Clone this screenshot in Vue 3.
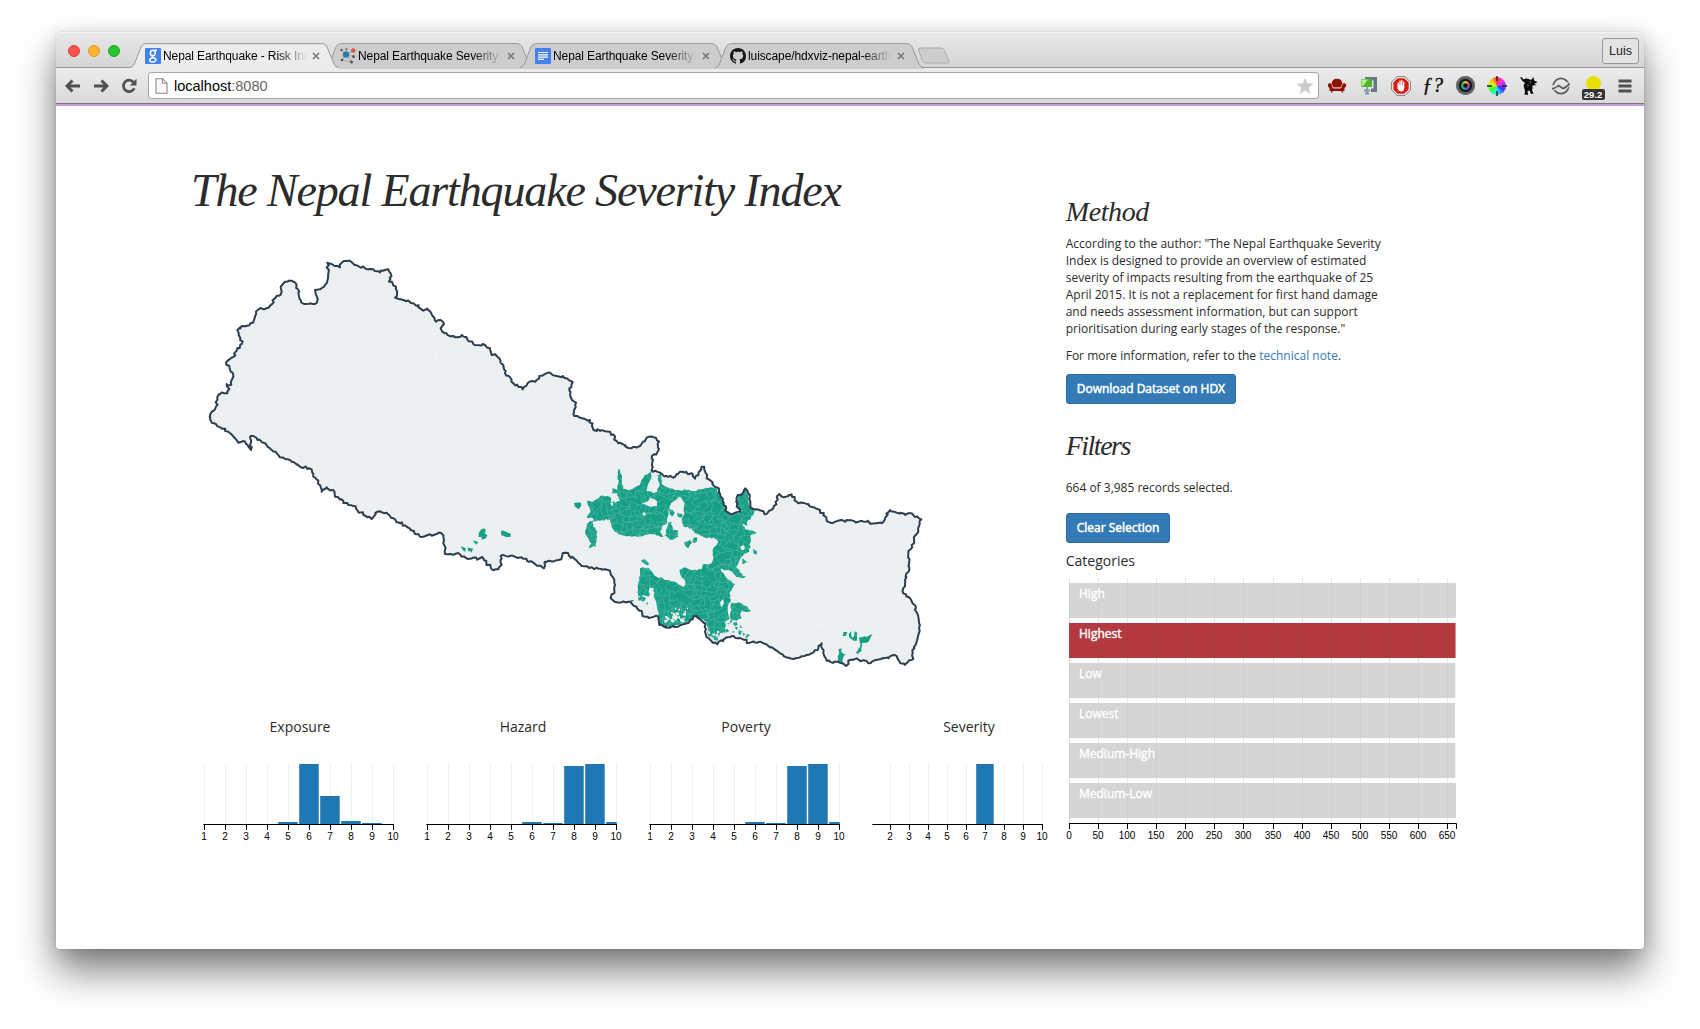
<script setup>
const tabs = [
  { title: 'Nepal Earthquake - Risk Ind', icon: 'google' },
  { title: 'Nepal Earthquake Severity', icon: 'network' },
  { title: 'Nepal Earthquake Severity', icon: 'docs' },
  { title: 'luiscape/hdxviz-nepal-earth', icon: 'github' },
]

const charts = [
  { name: 'Exposure', start: 15.3, first: 1, x1: 16.5, step: 21, bars: { 5: 2, 6: 60, 7: 28, 8: 3, 9: 1 } },
  { name: 'Hazard', start: 15.3, first: 1, x1: 16.5, step: 21, bars: { 6: 2, 7: 1, 8: 58, 9: 60, 10: 2 } },
  { name: 'Poverty', start: 15.3, first: 1, x1: 16.5, step: 21, bars: { 6: 2, 7: 1, 8: 58, 9: 60, 10: 2 } },
  { name: 'Severity', start: 15.3, first: 2, x1: 14.5, step: 19, bars: { 7: 60 } },
].map((c) => {
  const x = (n) => c.x1 + (n - 1) * c.step
  const ticks = []
  for (let n = c.first; n <= 10; n++) ticks.push({ n, x: Math.floor(x(n)) + 0.5 })
  const bars = Object.entries(c.bars).map(([n, h]) => ({
    n,
    h,
    x: x(+n) - c.step / 2 + 0.2,
    w: +n === 10 ? c.step / 2 : c.step - 1.5,
  }))
  return { ...c, ticks, bars, end: x(10) + 0.5 }
})

const categories = [
  { name: 'High', w: 387 },
  { name: 'Highest', w: 386.4, on: true },
  { name: 'Low', w: 386.2 },
  { name: 'Lowest', w: 385.8 },
  { name: 'Medium-High', w: 386.2 },
  { name: 'Medium-Low', w: 387 },
]
const catTicks = Array.from({ length: 14 }, (_, i) => ({ v: i * 50, x: Math.floor(3.5 + i * 29.08) + 0.5 }))

/* Small deterministic generator, so the map is the same on each load */
function rng(seed) {
  let s = seed
  return () => ((s = (s * 16807) % 2147483647) / 2147483647)
}
const parse = (str, dx = 0, dy = 0) =>
  str.trim().split(/\s+/).map((p) => {
    const [x, y] = p.split(',').map(Number)
    return [x + dx, y + dy]
  })
function rough(pts, amp, len, seed) {
  const r = rng(seed)
  const out = []
  pts.forEach((a, i) => {
    const b = pts[(i + 1) % pts.length]
    const d = Math.hypot(b[0] - a[0], b[1] - a[1])
    const n = Math.max(1, Math.round(d / len))
    out.push(a)
    for (let k = 1; k < n; k++) {
      out.push([
        a[0] + ((b[0] - a[0]) * k) / n + (r() - 0.5) * amp,
        a[1] + ((b[1] - a[1]) * k) / n + (r() - 0.5) * amp,
      ])
    }
  })
  return 'M' + out.map((p) => p.map((v) => v.toFixed(1)).join(' ')).join('L') + 'Z'
}

const northWest = parse(`65,548 62,520 78,500 82,470 95,457 112,460 118,447 110,432 124,434 130,405 122,395 118,378 108,368
  128,352 140,332 155,312 158,305 146,285 142,270 155,258 178,256 192,240 198,215 205,208 222,208 240,197 255,175 275,155
  272,142 285,125 305,122 315,127 328,155 332,180 342,192 375,192 383,178 375,150 390,148 410,130 415,100 412,68 425,72
  450,82 455,68 475,62 500,76 550,88 570,97 595,88 602,100 597,125 618,140 622,155 615,173 640,180 670,190 700,212 712,206
  738,245 752,240 762,252 752,265 770,280 795,292 815,285 850,312 885,315 900,325 905,345 920,348 940,375 945,400 970,430
  998,448 1018,425 1040,420 1048,408 1080,398 1100,408 1118,408`)
const east = parse(`15,55 38,66 28,85 36,120 48,128 43,168 90,180 100,210 150,215 170,243 205,264 240,258 260,233 280,232
  297,245 293,275 275,295 277,335 300,338 320,348 345,350 360,335 395,340 405,356 415,345 425,320 433,320 440,355 470,382
  482,410 498,440 495,452 515,463 540,455 530,440 533,405 548,400 556,385 565,400 570,440 590,448 620,462 640,445 658,402
  672,412 695,403 710,425 745,432 780,450 800,482 820,488 860,480 884,484 920,485 945,490 965,490 990,450 1010,458 1060,465
  1084,478 1075,515 1055,555 1045,585 1048,630 1035,660 1030,700 1065,735 1080,795 1070,845 1058,880 1055,900 1035,915
  1015,900 1005,885 985,895 960,898 925,910 890,895 865,902 858,918 845,910 800,902 790,880 785,850 775,865 740,885 700,897
  660,880 640,865 600,845 570,848 515,828 500,832 472,853 440,832 437,790 410,768 380,790 330,803 298,795 295,770 255,770
  230,740 205,725 180,728 152,715 163,690 163,660 150,632 65,618 45,598 15,578`, 1110, 360)
const southWest = parse(`1105,960 1065,965 1062,985 995,952 932,948 935,975 925,988 905,988 880,955 830,955 810,943 765,942
  762,900 755,880 690,890 660,865 610,835 590,818 562,815 545,837 520,825 490,798 475,795 435,770 430,750 410,742 395,755
  390,735 370,710 365,688 330,680 305,665 265,645 240,625 215,605 190,588 180,592 183,630 165,605 145,608 115,575`)
const country = rough([...northWest, ...east, ...southWest], 8, 7, 77)

const affectedShapes = [
  `158,385 172,390 176,328 180,328 186,365 190,388 215,388 240,375 255,345 272,335 274,345 262,380 258,392 280,400 292,395
   298,370 292,345 302,340 304,370 318,380 345,390 380,390 410,392 455,382 468,382 482,412 498,440 495,452 515,463 540,457
   530,435 533,405 548,400 556,387 565,405 568,440 582,448 580,465 565,480 562,497 550,490 555,508 590,518 572,525 572,545
   568,575 555,580 545,590 537,605 528,622 545,640 558,650 545,655 525,645 510,632 482,628 500,655 525,672 515,690 508,700
   512,725 503,740 508,778 495,785 495,820 480,820 472,842 445,828 440,785 410,768 380,785 350,795 330,802 300,795 295,765
   290,735 282,712 282,685 270,682 266,710 250,705 235,708 233,680 240,625 268,625 290,650 320,660 350,668 372,680 376,665
   360,640 358,630 372,622 400,630 425,628 430,612 455,610 460,590 458,570 475,545 460,532 440,535 405,520 395,505 370,498
   365,480 372,465 374,430 360,410 340,425 328,440 325,465 320,490 305,500 300,515 310,530 285,523 255,525 235,530 195,528
   165,515 155,500 150,478 125,480 105,485 100,475 80,472 92,455 82,422 100,425 120,408 150,410 156,430 176,410 172,400 155,400`,
  '42,430 63,428 64,438 55,448 45,440',
  '88,485 100,482 100,500 112,515 108,560 86,562 94,550 76,522 80,500',
  '326,446 338,450 344,458 336,470 328,462',
  '352,458 368,462 366,472 354,470',
  '325,488 335,485 338,510 355,512 354,530 335,540 312,528 318,510',
  '375,545 390,540 396,548 385,565 376,558',
  '398,540 410,532 410,545 402,550',
  '245,600 255,598 268,612 262,616 244,604',
  '580,565 592,575 590,583 582,582',
  '550,595 565,608 545,612',
  '515,728 540,728 562,740 573,752 555,755 545,752 540,762 545,775 530,782 512,778',
  '234,712 245,708 258,715 250,725 236,722',
  '212,720 222,720 215,730', '258,728 264,728 262,736', '502,790 510,788 506,800', '520,788 530,786 533,795 524,798',
  '540,792 548,805 540,803', '535,808 548,815 542,826 534,820', '560,822 570,825 562,835 555,832', '518,812 524,815 518,820',
  '510,780 518,782 512,792', '500,806 508,812 500,818', '526,800 534,802 530,810', '548,818 556,822 550,828',
  '850,816 862,816 858,828 848,828', '866,828 874,814 878,834 884,814 892,818 890,842 880,842',
  '898,832 925,828 938,822 930,836 920,848 905,850 905,870 895,885 886,878 900,862',
  '835,868 845,865 848,880 860,885 850,892 850,908 838,910 834,895',
].map((s) => parse(s, 1110, 360))
const westShapes = [
  '866,882 874,868 887,867 884,880 892,886 888,895 876,900 874,890 866,892', '934,872 950,876 962,880 962,890 950,892 934,886',
  '848,902 865,906 858,914', '812,918 828,926 825,935', '836,922 850,926 845,938 834,934',
].map((s) => parse(s))
const affected = [...affectedShapes, ...westShapes].map((p, i) => rough(p, 6, 7, 100 + i)).join('')

const gapShapes = [
  '245,430 262,425 270,412 280,416 292,425 292,438 270,440', '248,457 258,460 256,467 248,466', '160,416 176,412 180,422 164,428',
  '540,560 552,555 555,565 545,570', '556,585 565,590 550,598', '480,728 490,718 492,730 484,742', '150,430 160,428 158,438',
  '310,522 320,520 316,530', '562,600 572,606 560,606',
].map((s) => parse(s, 1110, 360))
const speck = rng(4711)
for (let i = 0; i < 26; i++) {
  const x = 1110 + 312 + speck() * 70
  const y = 360 + 742 + speck() * 40
  const s = 3 + speck() * 6
  gapShapes.push([[x, y], [x + s, y - 2], [x + s * 1.2, y + s * 0.7], [x + 2, y + s]])
}
for (let i = 0; i < 16; i++) {
  const x = 1110 + 440 + speck() * 52
  const y = 360 + 812 + speck() * 26
  const s = 3 + speck() * 6
  gapShapes.push([[x, y], [x + s, y - 2], [x + s, y + s * 0.7], [x + 2, y + s]])
}
const gaps = gapShapes.map((p, i) => rough(p, 3, 7, 300 + i)).join('')

/* District mesh: an irregular lattice with some of its edges left out */
function mesh(x0, y0, x1, y1, size, seed) {
  const r = rng(seed)
  const rows = []
  for (let y = y0, j = 0; y <= y1; y += size, j++) {
    const row = []
    for (let x = x0; x <= x1; x += size) {
      row.push([x + (j % 2) * size * 0.5 + (r() - 0.5) * size * 1.1, y + (r() - 0.5) * size * 1.1])
    }
    rows.push(row)
  }
  let d = ''
  const seg = (a, b) => (d += `M${a[0].toFixed(1)} ${a[1].toFixed(1)}L${b[0].toFixed(1)} ${b[1].toFixed(1)}`)
  rows.forEach((row, j) =>
    row.forEach((p, i) => {
      if (row[i + 1] && r() > 0.3) seg(p, row[i + 1])
      if (rows[j + 1] && r() > 0.3) seg(p, rows[j + 1][i])
    }),
  )
  return d
}
const greyMesh = mesh(60, 60, 2200, 1280, 17, 9)
const greenMesh = mesh(1180, 700, 1710, 1210, 14, 31)
</script>

<template>
  <div class="desktop">
    <div class="window">
      <header class="strip">
        <div class="lights"><i class="red"></i><i class="amber"></i><i class="green"></i></div>
        <div class="tabs">
          <div v-for="(t, i) in tabs" :key="i" class="tab" :class="{ active: i === 0 }">
            <svg class="shape" width="210" height="26" viewBox="0 0 210 26">
              <path class="fill" d="M0 25Q3 24 4.500 21L10.500 5Q12 1 15.500 1H192Q196 1 197.500 5L204 21Q205 24.500 209 25V26H0Z" />
              <path class="edge" d="M0 24.500Q3 24 4.500 21L10.500 5Q12 .6 15.500 .6H192Q196 .6 197.500 5L204 21Q205 24.500 209 24.500" />
            </svg>
            <svg class="fav" width="16" height="16" viewBox="0 0 16 16">
              <template v-if="t.icon === 'google'">
                <rect width="16" height="16" rx="1" fill="#4481ec" />
                <g fill="none" stroke="#fff" stroke-width="1.500">
                  <ellipse cx="7.800" cy="4.900" rx="2.500" ry="2.700" />
                  <path d="M9.500 2.300L12 2M8 7.600Q6 8.800 8.200 9.500Q11.300 10.500 10.800 12.300Q10 14.200 7.500 14.100Q4.500 13.900 4.700 12Q5 10.300 8 9.800" />
                </g>
              </template>
              <template v-else-if="t.icon === 'network'">
                <path d="M2 2.500L6 6.500L13 3M6 6.500L13 8.500M6 6.500L2 12L11 14M6 6.500L11 13" stroke="#999" stroke-width=".8" fill="none" />
                <circle cx="6" cy="6.500" r="3.200" fill="#2a7ab0" /><circle cx="13.200" cy="2.500" r="2.300" fill="#d9544f" />
                <g fill="#555"><circle cx="1.500" cy="2" r="1.200" /><circle cx="6.500" cy="1.300" r="1" /><circle cx="13.500" cy="8.500" r="1.500" /><circle cx="2" cy="12" r="1.300" /><circle cx="11.500" cy="14" r="1.500" /></g>
              </template>
              <template v-else-if="t.icon === 'docs'">
                <rect width="16" height="16" rx="1" fill="#4481ec" />
                <path d="M3 4.500h10M3 6.800h10M3 9.100h10M3 11.400h6" stroke="#fff" stroke-width="1.200" />
              </template>
              <path v-else fill="#181616" d="M8 0C3.580 0 0 3.580 0 8c0 3.540 2.290 6.530 5.470 7.590.4.070.55-.17.55-.38 0-.19-.01-.82-.01-1.490-2.010.37-2.530-.49-2.690-.94-.09-.23-.48-.94-.82-1.130-.28-.15-.68-.52-.01-.53.63-.01 1.080.58 1.230.82.72 1.210 1.870.87 2.330.66.070-.52.28-.87.51-1.070-1.780-.2-3.640-.89-3.640-3.950 0-.87.31-1.590.82-2.150-.08-.2-.36-1.020.08-2.120 0 0 .67-.21 2.200.82.64-.18 1.320-.27 2-.27s1.360.090 2 .27c1.530-1.040 2.200-.82 2.200-.82.44 1.100.16 1.920.08 2.120.51.56.82 1.270.82 2.150 0 3.070-1.870 3.750-3.650 3.950.29.25.54.73.54 1.480 0 1.070-.01 1.930-.01 2.200 0 .21.15.46.55.38A8.010 8.010 0 0 0 16 8c0-4.420-3.580-8-8-8z" />
            </svg>
            <span class="tab-title">{{ t.title }}</span>
            <svg class="close" width="8" height="8" viewBox="0 0 8 8"><path d="M1 1L7 7M7 1L1 7" stroke="#777" stroke-width="1.600" /></svg>
          </div>
          <svg class="new-tab" width="34" height="18" viewBox="0 0 34 18">
            <path d="M3.500 1H24Q26.500 1 27.500 3.500L32 14Q32.500 16 30.500 16H9Q6.500 16 5.500 13.500L1.500 3Q1 1 3.500 1Z" fill="#cdcdcd" stroke="#aaa" />
          </svg>
        </div>
        <div class="profile">Luis</div>
      </header>

      <div class="toolbar">
        <nav class="nav">
          <svg width="16" height="14" viewBox="0 0 16 14"><path d="M7.500 1.500L2 7L7.500 12.500M2 7H15" fill="none" stroke="#505050" stroke-width="3" /></svg>
          <svg width="16" height="14" viewBox="0 0 16 14"><path d="M8.500 1.500L14 7L8.500 12.500M14 7H1" fill="none" stroke="#505050" stroke-width="3" /></svg>
          <svg width="16" height="16" viewBox="0 0 16 16"><path d="M12.500 4.200A5.700 5.700 0 1 0 13.300 10.300" fill="none" stroke="#505050" stroke-width="2.700" /><path d="M15.500 .8V7.500H8.800Z" fill="#505050" /></svg>
        </nav>
        <div class="address">
          <svg width="13" height="16" viewBox="0 0 13 16"><path d="M1 .7H7.500L12 5.200V15.300H1Z" fill="#fafafa" stroke="#888" stroke-width="1.100" /><path d="M7.500 .7V5.200H12" fill="none" stroke="#888" /></svg>
          <span class="url">localhost<em>:8080</em></span>
          <svg class="star" width="18" height="18" viewBox="0 0 18 18"><path d="M9 .5L11.300 6.300L17.500 6.700L12.800 10.700L14.300 17L9 13.600L3.700 17L5.200 10.700L.5 6.700L6.700 6.300Z" fill="#ccc" /></svg>
        </div>
        <div class="extensions">
          <span>
            <svg width="20" height="16" viewBox="0 0 20 16"><path d="M4.500 6Q5 .8 10 .8T15.500 6L14 9.500H6Z" fill="#8f1206" /><path d="M.8 6.500Q2.500 4.500 4.500 6L6 10.300H14L15.500 6Q17.500 4.500 19.200 6.500Q19.500 8.500 17.500 10V13H16V14.500H14.500V13H5.500V14.500H4V13H2.500V10Q.5 8.500 .8 6.500Z" fill="#8f1206" /><path d="M4.800 6.500L6.300 10H13.700L15.200 6.500" stroke="#e9c5bf" stroke-width=".7" fill="none" /></svg>
          </span>
          <span>
            <svg width="18" height="20" viewBox="0 0 18 20"><path d="M5 1H17V16H11V12.500H13.500V4.500H5Z" fill="#66798b" /><rect x="1" y="3" width="11" height="8" rx="1" fill="#4fb52f" /><path d="M1.500 3.500H8L3 10H1.500Z" fill="#b5f08c" /><path d="M7 11V17M4 14.500H10M5 17.500H9" stroke="#8398a9" stroke-width="1.800" /></svg>
          </span>
          <span>
            <svg width="20" height="20" viewBox="0 0 20 20"><path d="M6 .7H14L19.300 6V14L14 19.300H6L.7 14V6Z" fill="#fff" stroke="#555" stroke-width=".8" /><path d="M6.600 2.300H13.400L17.700 6.600V13.400L13.400 17.700H6.600L2.300 13.400V6.600Z" fill="#d81c12" /><path d="M6.500 7Q7.500 6 7.900 7V9.300H8.300V5Q9 4 9.700 5V9H10.100V4.500Q10.900 3.700 11.500 4.500V9.200H12V6Q12.700 5.200 13.300 6V12Q13 15.500 10 15.500Q7.500 15.300 6.500 12.500Z" fill="#fff" /></svg>
          </span>
          <span class="whatfont">ƒ?</span>
          <span><i class="lens"><b></b></i></span>
          <span>
            <i class="wheel"></i>
            <svg class="cross" width="20" height="20" viewBox="0 0 20 20"><path d="M10 0V5M10 15V20M0 10H5M15 10H20" stroke="#222" stroke-width="1.400" /></svg>
          </span>
          <span>
            <svg width="18" height="20" viewBox="0 0 18 20"><path d="M0 1.500L2 1.200L3 3.500L6 2.500Q9 2.500 11 4L13.500 1L14 4.500L17.500 6L14 8L17 9L12.500 9.500V12.500L12 14.500L13.500 17.500L11 18L9.500 14.500L7.500 15L8 19L4.500 18.500L5 15L3.500 9.500L5 7L2.500 5Z" fill="#080808" /><path d="M10 6h1.200M7.500 9.500h1" stroke="#ddd" stroke-width=".9" /></svg>
          </span>
          <span>
            <svg width="18" height="18" viewBox="0 0 18 18"><circle cx="9" cy="9" r="7.700" fill="none" stroke="#5a5a5a" stroke-width="1.700" /><path d="M1 11.500L6.500 7.500L11 11L17 7" fill="none" stroke="#e1e1e1" stroke-width="5" /><path d="M0 11.800Q4 11 6.500 8.500L11 11.500Q13 11 17.500 7" fill="none" stroke="#5a5a5a" stroke-width="1.700" /></svg>
          </span>
          <span class="temp"><i></i><b>29.2</b></span>
          <span>
            <svg width="14" height="14" viewBox="0 0 14 14"><path d="M.5 2H13.500M.5 7H13.500M.5 12H13.500" stroke="#505050" stroke-width="2.800" /></svg>
          </span>
        </div>
      </div>

      <main class="page">
        <section class="left">
          <h1>The Nepal Earthquake Severity Index</h1>
          <svg class="map" width="760" height="440" viewBox="0 0 2280 1320">
            <defs>
              <clipPath id="country-clip"><path :d="country" /></clipPath>
              <clipPath id="affected-clip"><path :d="affected" /></clipPath>
            </defs>
            <path :d="country" fill="#ebeff0" />
            <path :d="greyMesh" fill="none" stroke="#f1f4f4" stroke-width="1.500" clip-path="url(#country-clip)" />
            <path :d="affected" fill="#18a086" />
            <path :d="greenMesh" fill="none" stroke="#55bba7" stroke-width="1.800" clip-path="url(#affected-clip)" />
            <path :d="gaps" fill="#ebeff0" />
            <path :d="country" fill="none" stroke="#2c3e50" stroke-width="6" stroke-linejoin="round" />
          </svg>
          <div class="charts">
            <figure v-for="c in charts" :key="c.name">
              <figcaption>{{ c.name }}</figcaption>
              <svg width="223" height="95" viewBox="0 0 223 95">
                <path v-for="t in c.ticks" :key="t.n" :d="`M${t.x} 10V70`" stroke="#f0f0f0" />
                <rect v-for="b in c.bars" :key="b.n" :x="b.x" :y="70 - b.h" :width="b.w" :height="b.h" fill="#1f77b4" />
                <path :d="`M${c.start} 70.500H${c.end}`" stroke="#000" />
                <g v-for="t in c.ticks" :key="'t' + t.n">
                  <path :d="`M${t.x} 70V76`" stroke="#000" />
                  <text :x="t.x - 0.4" y="86" class="tick">{{ t.n }}</text>
                </g>
              </svg>
            </figure>
          </div>
        </section>

        <aside class="right">
          <h2>Method</h2>
          <p>According to the author: "The Nepal Earthquake Severity Index is designed to provide an overview of estimated severity of impacts resulting from the earthquake of 25 April 2015. It is not a replacement for first hand damage and needs assessment information, but can support prioritisation during early stages of the response."</p>
          <p>For more information, refer to the <a>technical note</a>.</p>
          <button>Download Dataset on HDX</button>
          <h2 class="filters">Filters</h2>
          <p class="count">664 of 3,985 records selected.</p>
          <button>Clear Selection</button>
          <div class="cat-title">Categories</div>
          <svg class="cats" width="410" height="270" viewBox="0 0 410 270">
            <rect v-for="(c, i) in categories" :key="c.name" x="3" :y="5 + i * 40" :width="c.w" height="35" :fill="c.on ? '#b53b40' : '#d5d5d5'" />
            <path v-for="t in catTicks" :key="t.v" :d="`M${t.x} 0V245`" stroke="#000" stroke-opacity=".1" />
            <rect v-for="(c, i) in categories" :key="'o' + c.name" x="3" :y="5 + i * 40" :width="c.w" height="35" :fill="c.on ? '#b53b40' : '#d5d5d5'" opacity=".65" />
            <text v-for="(c, i) in categories" :key="'l' + c.name" x="13" :y="20 + i * 40" class="cat-label">{{ c.name }}</text>
            <path d="M3.500 251V245.500H390.500V251" fill="none" stroke="#000" />
            <g v-for="t in catTicks" :key="'t' + t.v">
              <path :d="`M${t.x} 245V251`" stroke="#000" />
              <text :x="t.x - 0.5" y="261" class="tick">{{ t.v }}</text>
            </g>
          </svg>
        </aside>
      </main>
    </div>
  </div>
</template>

<style>
body { margin: 0; background: #fff; }
</style>

<style scoped>
.desktop { width: 1700px; height: 1029px; overflow: hidden; background: #fff; display: flex; align-items: flex-start; box-sizing: border-box; padding: 32px 56px 0; font-family: "Open Sans", "Noto Sans", sans-serif; color: #2b2b2b; }
.window { width: 1588px; height: 917px; background: #fff; border-radius: 5px 5px 3px 3px; box-shadow: 0 0 1px rgba(0,0,0,.45), 0 22px 38px rgba(0,0,0,.5), 0 3px 18px rgba(0,0,0,.12); }
.strip { height: 36px; box-sizing: border-box; border-bottom: 1px solid #999; border-radius: 5px 5px 0 0; background: linear-gradient(#e9e9e9, #d5d5d5); display: flex; align-items: flex-start; box-shadow: inset 0 1px #f5f5f5; }
.lights { display: flex; gap: 8px; padding: 13px 0 0 12px; width: 62px; }
.lights i { width: 12px; height: 12px; border-radius: 50%; box-sizing: border-box; }
.red { background: #fc544c; border: 1px solid #df3d38; }
.amber { background: #fdb62b; border: 1px solid #dd9a20; }
.green { background: #28c331; border: 1px solid #1ba523; }
.tabs { display: flex; padding-top: 11px; flex: 1; }
.tab { position: relative; width: 180px; height: 25px; padding-left: 15px; display: flex; align-items: center; font: 12px "Liberation Sans", sans-serif; color: #000; z-index: 1; }
.tab.active { z-index: 3; }
.shape { position: absolute; left: 0; top: 0; }
.fill { fill: #cdcdcd; }
.edge { fill: none; stroke: #999; }
.active .fill { fill: #ececec; }
.active .edge { stroke-dasharray: 400; }
.fav { position: relative; flex: none; }
.tab-title { position: relative; margin-left: 2px; width: 143px; letter-spacing: -.1px; white-space: nowrap; -webkit-mask-image: linear-gradient(90deg, #000 114px, transparent 144px); mask-image: linear-gradient(90deg, #000 114px, transparent 144px); }
.close { position: relative; margin-left: 6px; }
.new-tab { margin: 4px 0 0 7px; }
.profile { width: 37px; height: 26px; box-sizing: border-box; margin: 6px 5px 0 0; border: 1px solid #999; border-radius: 3px; font: 12.500px/25px "Liberation Sans", sans-serif; text-align: center; color: #222; background: #e4e4e4; }
.toolbar { height: 38px; box-sizing: border-box; border-bottom: 2px solid #c79bdb; box-shadow: inset 0 -1px #777; background: linear-gradient(#ececec, #d9d9d9); display: flex; padding-top: 4px; }
.nav { display: flex; gap: 12px; width: 83px; height: 27px; align-items: center; padding-left: 9px; }
.address { width: 1171px; height: 27px; box-sizing: border-box; border: 1px solid #a6a6a6; border-radius: 3px; background: #fff; display: flex; align-items: center; padding: 0 4px 0 6px; margin-right: 2px; }
.url { margin-left: 6px; flex: 1; font: 14.500px "Liberation Sans", sans-serif; color: #000; }
.url em { font-style: normal; color: #666; }
.extensions { display: flex; height: 27px; }
.extensions > span { width: 32px; display: flex; align-items: center; justify-content: center; position: relative; }
.extensions > .whatfont { font: italic 400 20px "Liberation Serif", serif; -webkit-text-stroke: .4px #111; letter-spacing: .5px; color: #111; }
.lens { width: 19px; height: 19px; border-radius: 50%; background: #555b60; display: flex; align-items: center; justify-content: center; box-shadow: inset 0 0 0 1px #777; }
.lens b { width: 9px; height: 9px; border-radius: 50%; border: 2px solid #111; background: radial-gradient(#111 20%, transparent 45%), conic-gradient(#e8ce2c, #e23888, #5360cb, #26a1b0, #26a84a, #e8ce2c); }
.wheel { width: 18px; height: 18px; border-radius: 50%; background: conic-gradient(#f33, #f3d, #a3f, #33f, #3bf, #2fb, #3f3, #cf2, #fb2, #f33); }
.cross { position: absolute; left: 6px; top: 4px; }
.temp i { width: 15px; height: 15px; border-radius: 50%; background: #e9e000; margin-top: -4px; }
.temp b { position: absolute; left: 4.500px; bottom: -1px; width: 23px; height: 11px; border-radius: 2px; background: #333; color: #fff; font: 700 9.500px/11px "Liberation Sans", sans-serif; text-align: center; }

.page { display: flex; height: 843px; padding-left: 132px; }
.left { width: 878px; }
h1 { margin: 55px 0 0 3px; height: 67px; font: italic 400 46px/60px "Liberation Serif", serif; white-space: nowrap; letter-spacing: -1.140px; }
.map { display: block; margin: 12px 0 0 2px; }
.charts { display: flex; margin-top: 36px; }
figure { margin: 0; width: 223px; flex: none; }
figcaption { text-align: center; font-size: 14px; line-height: 22px; margin-bottom: 16px; padding-left: 1px; }
figure svg, .cats { display: block; overflow: visible; }
.tick { font: 10px "Liberation Sans", sans-serif; text-anchor: middle; fill: #000; }
.right { width: 410px; margin-left: -.3px; }
h2 { font: italic 400 28px/32px "Liberation Serif", serif; margin: 90px 0 7px; letter-spacing: -.4px; }
p { width: 325px; margin: 0 0 10px; font-size: 12px; line-height: 17px; }
a { color: #337ab7; }
button { display: block; height: 30px; padding: 0 10px; border: 1px solid #2e6da4; border-radius: 3px; background: #337ab7; color: #fff; font: 400 12px/18px "Open Sans", sans-serif; -webkit-text-stroke: .5px #fff; }
h2.filters { margin: 26px 0 17px; letter-spacing: -1.500px; }
.count { margin-bottom: 17px; }
.cat-title { font-size: 14px; line-height: 20px; margin: 8px 0 7px; }
.cat-label { font: 400 12px "Open Sans", sans-serif; fill: #fff; stroke: #fff; stroke-width: .4px; }
</style>
